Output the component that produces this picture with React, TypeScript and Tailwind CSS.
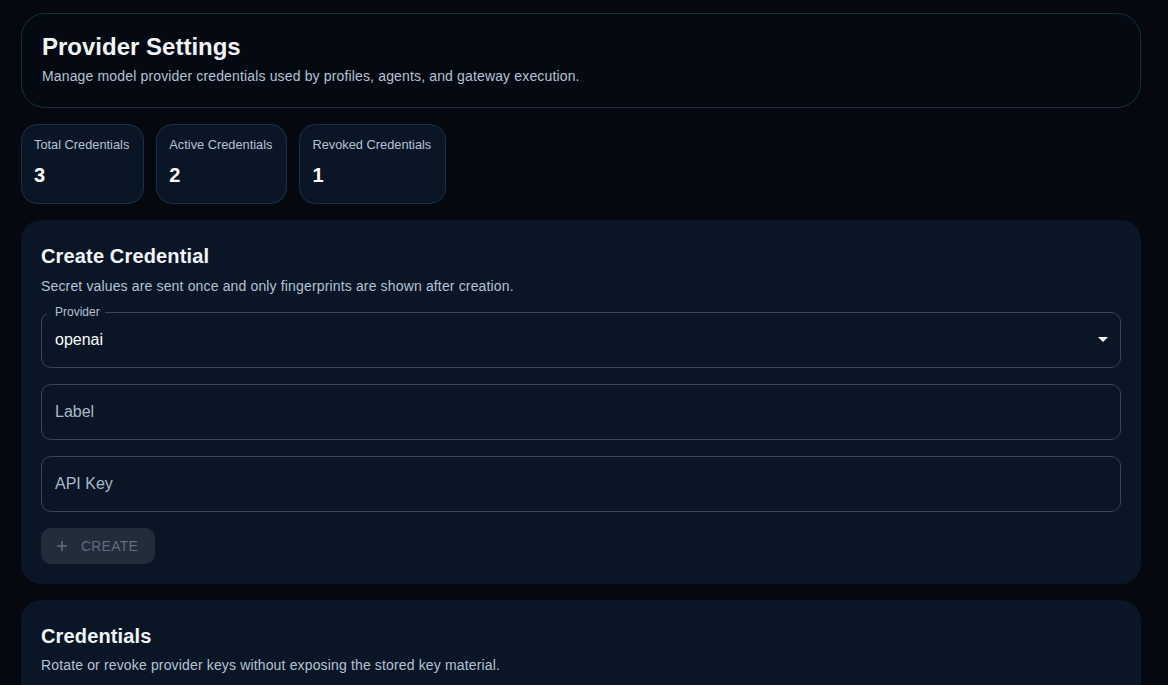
export default function App() {
  const stats = [
    { label: 'Total Credentials', value: '3' },
    { label: 'Active Credentials', value: '2' },
    { label: 'Revoked Credentials', value: '1' },
  ];

  return (
    <div className="min-h-[685px] bg-[#05090f] pl-[21px] pr-[27px] pt-[13px] font-['Liberation_Sans',Arial,sans-serif] text-white">
      <div className="flex flex-col gap-[16px]">
        {/* header */}
        <div className="rounded-[24px] border border-[#15303f] bg-[#050a12] px-[20px] pb-[21px] pt-[17px]">
          <h1 className="text-[24px] font-bold leading-[32px] text-[#f1f5f9]">Provider Settings</h1>
          <p className="mt-[3px] text-[14px] leading-[20px] tracking-[0.15px] text-[#b4c3d4]">
            Manage model provider credentials used by profiles, agents, and gateway execution.
          </p>
        </div>

        {/* stats */}
        <div className="flex gap-[12px]">
          {stats.map((s) => (
            <div
              key={s.label}
              className="h-[80px] rounded-[16px] border border-[#173247] bg-[#0a1526] pl-[12px] pr-[14px] pt-[12px]"
            >
              <div className="text-[12.8px] leading-[16px] text-[#b4c3d4]">{s.label}</div>
              <div className="mt-[10px] text-[20px] font-bold leading-[24px] text-white">{s.value}</div>
            </div>
          ))}
        </div>

        {/* create credential */}
        <div className="rounded-[20px] bg-[#0a1526] px-[20px] pb-[20px] pt-[23px]">
          <h2 className="text-[20px] font-bold leading-[26px] tracking-[0.15px] text-[#f1f5f9]">Create Credential</h2>
          <p className="mt-[8px] text-[14px] leading-[18px] tracking-[0.15px] text-[#b4c3d4]">
            Secret values are sent once and only fingerprints are shown after creation.
          </p>

          <div className="mt-[17px] flex flex-col gap-[16px]">
            <div className="relative flex h-[56px] items-center rounded-[10px] border border-[#3a4556] px-[13px]">
              <span className="absolute left-[5px] top-[-9px] bg-[#0a1526] pl-[8px] pr-[5px] text-[12px] leading-[16px] text-[#b4c3d4]">
                Provider
              </span>
              <span className="text-[16px] text-white">openai</span>
              <svg className="absolute right-[12px] top-[24px]" width="10" height="5" viewBox="0 0 10 5">
                <path d="M0 0h10L5 5z" fill="#ffffff" />
              </svg>
            </div>

            <div className="flex h-[56px] items-center rounded-[10px] border border-[#3a4556] px-[13px] text-[16px] text-[#aab8c8]">
              Label
            </div>
            <div className="flex h-[56px] items-center rounded-[10px] border border-[#3a4556] px-[13px] text-[16px] text-[#aab8c8]">
              API Key
            </div>

            <div>
              <button className="flex h-[36px] items-center gap-[13px] rounded-[10px] bg-[#222c3b] pl-[15px] pr-[17px] text-[14px] font-normal tracking-[0.2px] text-[#5f6d7e]">
                <svg width="12" height="12" viewBox="0 0 12 12">
                  <path d="M6 1v10M1 6h10" stroke="#5f6d7e" strokeWidth="1.6" />
                </svg>
                CREATE
              </button>
            </div>
          </div>
        </div>

        {/* credentials */}
        <div className="rounded-t-[20px] bg-[#0a1526] px-[20px] pb-[40px] pt-[23px]">
          <h2 className="text-[20px] font-bold leading-[26px] tracking-[0.15px] text-[#f1f5f9]">Credentials</h2>
          <p className="mt-[7px] text-[14px] leading-[18px] tracking-[0.15px] text-[#b4c3d4]">
            Rotate or revoke provider keys without exposing the stored key material.
          </p>
        </div>
      </div>
    </div>
  );
}
